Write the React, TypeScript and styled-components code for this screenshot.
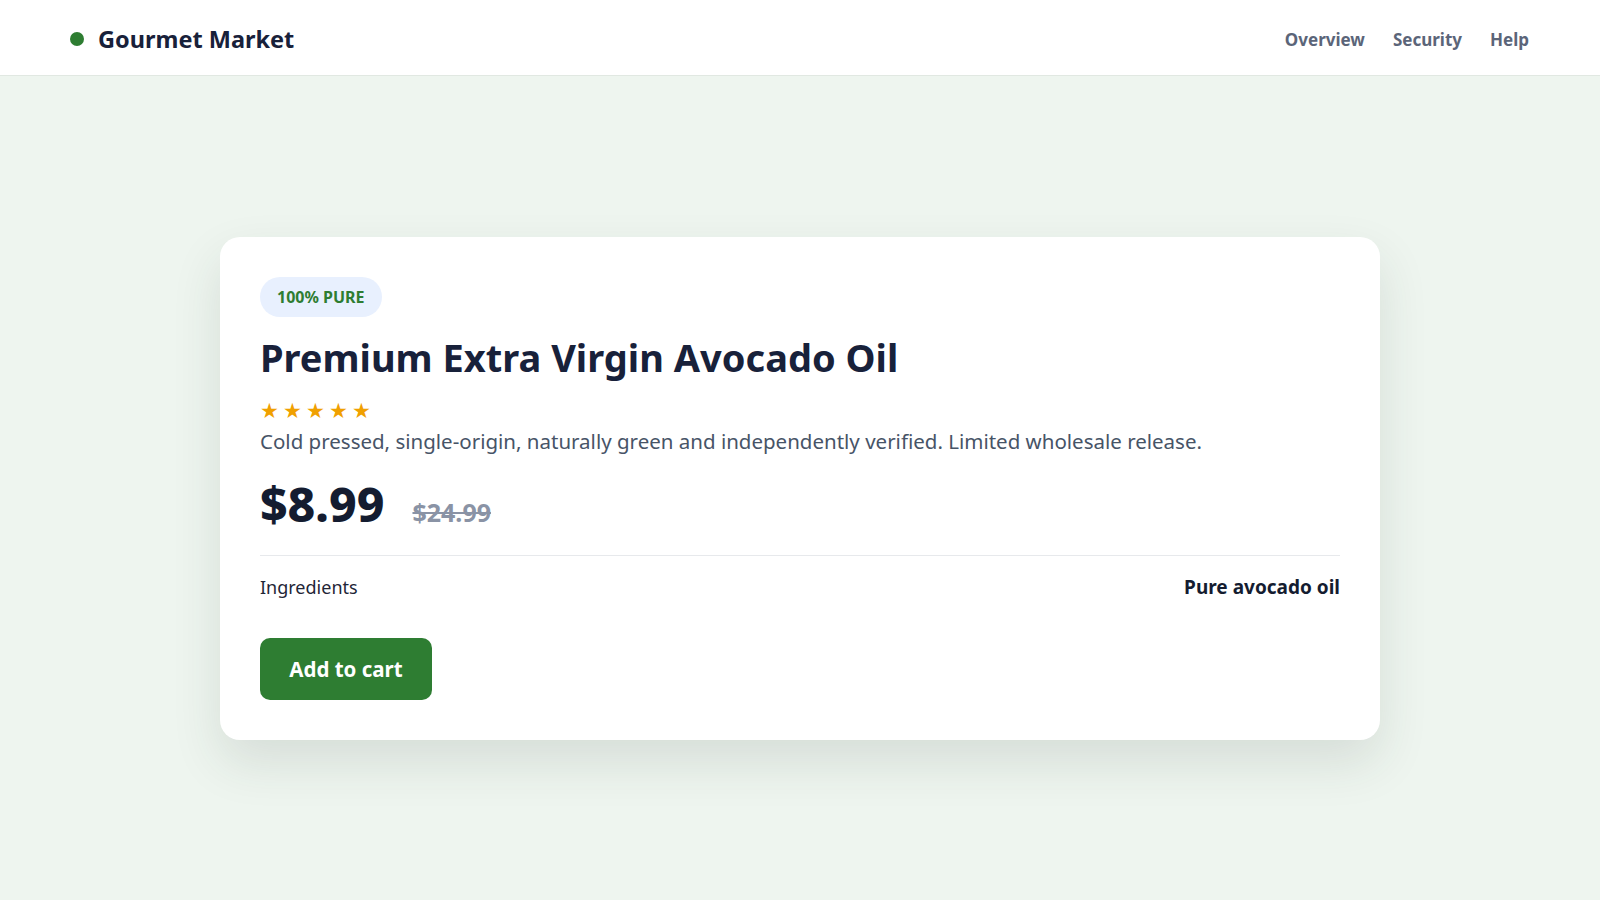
import React from "react";
import styled, { createGlobalStyle } from "styled-components";

const Global = createGlobalStyle`
  * { box-sizing: border-box; }
  html, body { margin: 0; padding: 0; }
  body {
    font-family: "Noto Sans", "Open Sans", sans-serif;
    background: #eef5ef;
    color: #1a2233;
  }
`;

const Page = styled.div`
  min-height: 900px;
  display: flex;
  flex-direction: column;
  background: #eef5ef;
`;

const Header = styled.header`
  height: 76px;
  background: #ffffff;
  border-bottom: 1px solid #e1e8e2;
  display: flex;
  align-items: center;
  justify-content: space-between;
  padding: 3px 71px 0 70px;
`;

const Brand = styled.div`
  display: flex;
  align-items: center;
  gap: 14px;
  font-size: 23.5px;
  font-weight: 700;
  color: #18213a;
`;

const Dot = styled.span`
  width: 14px;
  height: 14px;
  border-radius: 50%;
  background: #2e7d32;
`;

const Nav = styled.nav`
  display: flex;
  gap: 28px;
`;

const NavLink = styled.a`
  font-size: 17px;
  font-weight: 700;
  color: #5b6579;
  text-decoration: none;
`;

const Main = styled.main`
  flex: 1;
  display: flex;
  align-items: center;
  justify-content: center;
`;

const Card = styled.section`
  width: 1160px;
  background: #ffffff;
  border-radius: 20px;
  padding: 40px 40px 40px;
  box-shadow: 0 22px 50px rgba(40, 60, 50, 0.12);
  display: flex;
  flex-direction: column;
  align-items: flex-start;
`;

const Badge = styled.span`
  height: 40px;
  display: inline-flex;
  align-items: center;
  padding: 0 17px;
  border-radius: 999px;
  background: #e8f0fe;
  color: #2e7d32;
  font-size: 16px;
  font-weight: 700;
`;

const Title = styled.h1`
  margin: 14px 0 0;
  font-size: 38px;
  line-height: 52px;
  font-weight: 700;
  color: #18213a;
`;

const Stars = styled.div`
  margin-top: 17px;
  display: flex;
  gap: 4px;
  color: #f0a000;
  font-size: 21px;
  line-height: 21px;
`;

const Description = styled.p`
  margin: 6px 0 0;
  font-size: 20.5px;
  line-height: 28px;
  color: #475467;
`;

const PriceRow = styled.div`
  margin-top: 19px;
  display: flex;
  align-items: baseline;
  gap: 28px;
`;

const Price = styled.span`
  font-size: 48px;
  line-height: 60px;
  font-weight: 800;
  color: #141c30;
`;

const OldPrice = styled.span`
  font-size: 25px;
  font-weight: 700;
  color: #8a93a5;
  text-decoration: line-through;
`;

const Divider = styled.hr`
  align-self: stretch;
  margin: 21px 0 0;
  border: none;
  border-top: 1px solid #e7e9ec;
`;

const SpecRow = styled.div`
  align-self: stretch;
  display: flex;
  justify-content: space-between;
  align-items: center;
  margin-top: 18px;
  font-size: 18px;
  line-height: 26px;
`;

const SpecLabel = styled.span`
  color: #1f2637;
`;

const SpecValue = styled.span`
  font-size: 19px;
  font-weight: 700;
  color: #141c30;
`;

const Button = styled.button`
  margin-top: 38px;
  height: 62px;
  width: 172px;
  border: none;
  border-radius: 10px;
  background: #2e7d32;
  color: #ffffff;
  font-family: inherit;
  font-size: 20.5px;
  font-weight: 700;
  cursor: pointer;
`;

export default function App() {
  return (
    <>
      <Global />
      <Page>
        <Header>
          <Brand>
            <Dot />
            Gourmet Market
          </Brand>
          <Nav>
            <NavLink href="#">Overview</NavLink>
            <NavLink href="#">Security</NavLink>
            <NavLink href="#">Help</NavLink>
          </Nav>
        </Header>
        <Main>
          <Card>
            <Badge>100% PURE</Badge>
            <Title>Premium Extra Virgin Avocado Oil</Title>
            <Stars>
              {[0, 1, 2, 3, 4].map((i) => (
                <span key={i}>★</span>
              ))}
            </Stars>
            <Description>
              Cold pressed, single-origin, naturally green and independently verified. Limited wholesale release.
            </Description>
            <PriceRow>
              <Price>$8.99</Price>
              <OldPrice>$24.99</OldPrice>
            </PriceRow>
            <Divider />
            <SpecRow>
              <SpecLabel>Ingredients</SpecLabel>
              <SpecValue>Pure avocado oil</SpecValue>
            </SpecRow>
            <Button>Add to cart</Button>
          </Card>
        </Main>
      </Page>
    </>
  );
}
